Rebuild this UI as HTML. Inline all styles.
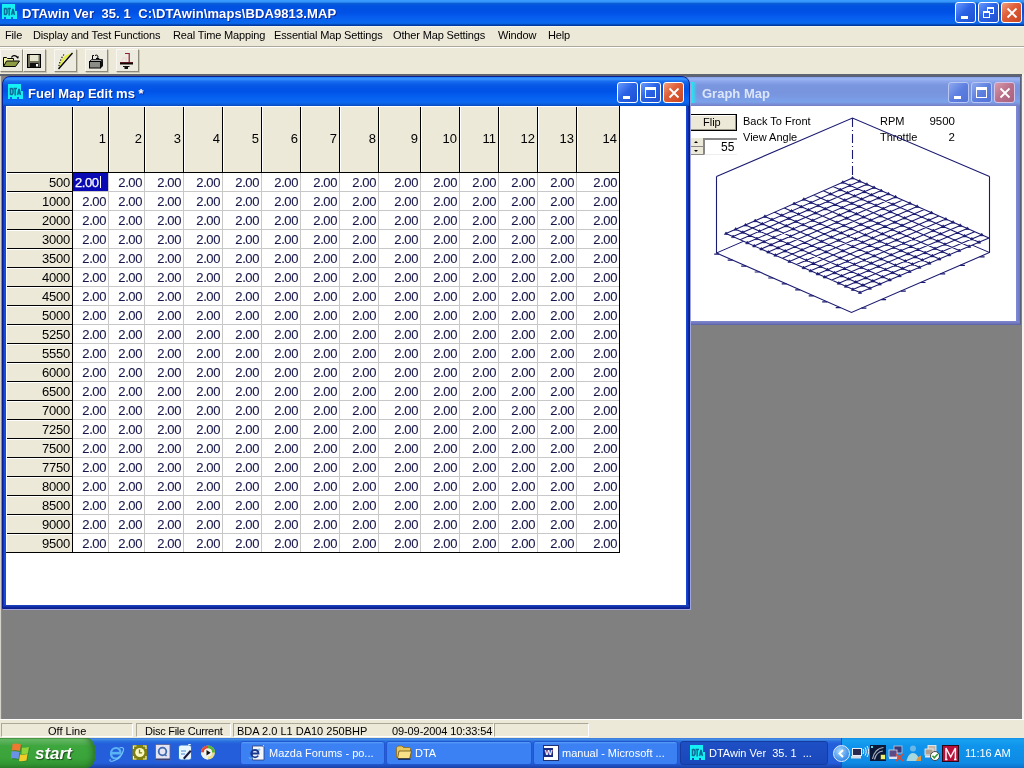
<!DOCTYPE html><html><head><meta charset="utf-8"><style>
*{box-sizing:border-box}
body{margin:0;width:1024px;height:768px;position:relative;overflow:hidden;background:#808080;font-family:'Liberation Sans', sans-serif;}
.ab{position:absolute}
.t{position:absolute;white-space:nowrap;line-height:1;will-change:transform}
.menu{font-size:11px;color:#000;letter-spacing:-0.15px}
.xb{position:absolute;width:21px;height:21px;border:1px solid #fff;border-radius:3px;background:linear-gradient(135deg,#6A9BFF 0%,#2A63E6 45%,#1E4FD0 100%)}
.xc{background:linear-gradient(135deg,#F0A080 0%,#E0603A 40%,#C84422 100%)}
.ib{border-color:#B9C7F2;background:linear-gradient(135deg,#8FA9EE 0%,#5C7FE0 50%,#5272D8 100%)}
.ic{border-color:#D6C3E8;background:linear-gradient(135deg,#D89AAA 0%,#B8708A 50%,#A86080 100%)}
.tb{position:absolute;top:49px;width:23px;height:23px;border-right:1px solid #8F8B7A;border-bottom:1px solid #8F8B7A;border-left:1px solid #F8F7F2;border-top:1px solid #F8F7F2;background:#EDEBE0;box-shadow:1px 1px 0 #C9C6B6}
.cell{position:absolute;font-size:13px;letter-spacing:-0.4px;color:#16164A;text-align:right;-webkit-text-stroke:0.1px #16164A}
.gt{-webkit-text-stroke:0px #000}
</style></head><body>

<div class="ab" style="left:0;top:0;width:1024px;height:26px;background:linear-gradient(to bottom,#3D9CFF 0px,#3393F8 2px,#0A5DD6 3.5px,#0052E0 6px,#0050E6 12px,#075FF0 18px,#0A68EE 23px,#0A5ED6 24px,#0039A0 25px,#0039A0 26px)"></div>
<svg class="ab" style="left:2px;top:4px" width="16" height="16" viewBox="0 0 16 16"><path d="M0 0H13V7H15V15H11V13H9V15H4V13H2V15H0z" fill="#14F0F4"/><path d="M2.5 4V11M2.5 4.5H4L5 6V9L4 10.5H2.5M5.5 4.5H9M7.2 4.5V11.5M9.5 11L11 5L12.5 11M10 9H12" fill="none" stroke="#0A6E98" stroke-width="1.5"/></svg>
<div class="t" style="left:22px;top:7px;font-size:13px;font-weight:bold;color:#fff;letter-spacing:0.1px;text-shadow:1px 1px 0 #0A2A9A">DTAwin Ver&nbsp; 35. 1&nbsp; C:\DTAwin\maps\BDA9813.MAP</div>
<div class="xb" style="left:955px;top:2px"><div class="ab" style="left:5px;top:13px;width:7px;height:3px;background:#fff"></div></div><div class="xb" style="left:978px;top:2px"><div class="ab" style="left:8px;top:4px;width:7px;height:7px;border:1px solid #fff;border-top-width:2px"></div><div class="ab" style="left:4px;top:8px;width:7px;height:7px;border:1px solid #fff;border-top-width:2px;background:#2E62E2"></div></div><div class="xb xc" style="left:1001px;top:2px"><svg class="ab" style="left:2px;top:2px" width="15" height="15" viewBox="0 0 15 15"><path d="M3.5 3.5l9 9M12.5 3.5l-9 9" stroke="#fff" stroke-width="1.8"/></svg></div>
<div class="ab" style="left:0;top:26px;width:1024px;height:20px;background:#ECE9D8;border-top:1px solid #F6F6F0"></div>
<div class="t menu" style="left:5px;top:30px">File</div>
<div class="t menu" style="left:33px;top:30px">Display and Test Functions</div>
<div class="t menu" style="left:173px;top:30px">Real Time Mapping</div>
<div class="t menu" style="left:274px;top:30px">Essential Map Settings</div>
<div class="t menu" style="left:393px;top:30px">Other Map Settings</div>
<div class="t menu" style="left:498px;top:30px">Window</div>
<div class="t menu" style="left:548px;top:30px">Help</div>
<div class="ab" style="left:0;top:46px;width:1024px;height:1px;background:#ACA899"></div><div class="ab" style="left:0;top:47px;width:1024px;height:1px;background:#fff"></div>
<div class="ab" style="left:0;top:48px;width:1024px;height:26px;background:#ECE9D8"></div>
<div class="ab" style="left:0;top:74px;width:1024px;height:2px;background:#5E6470"></div>
<div class="tb" style="left:0px"></div>
<div class="tb" style="left:23px"></div>
<div class="tb" style="left:54px"></div>
<div class="tb" style="left:85px"></div>
<div class="tb" style="left:116px"></div>
<svg class="ab" style="left:0;top:46px" width="140" height="28" viewBox="0 46 140 28">
<path d="M11.5 57.5c0.5-2 4-3 6 0" fill="none" stroke="#000" stroke-width="1.1"/><path d="M16 56.5h3l-1 2.5z" fill="#000"/>
<path d="M3.5 66.5V57.5h3l1 1h6v2" fill="#F2F4A8" stroke="#000" stroke-width="1"/>
<path d="M3.5 66.5l3-5.5h13l-4 5.5z" fill="#8E9A44" stroke="#000" stroke-width="1"/>
<rect x="27.5" y="54.5" width="13" height="13" fill="#6E6E58" stroke="#000" stroke-width="1"/>
<rect x="30" y="55" width="8.5" height="6" fill="#E6E6D0"/>
<rect x="30" y="63" width="8.5" height="4.5" fill="#111"/><rect x="36" y="64" width="2" height="2.5" fill="#fff"/>
<path d="M59 68.5C60 61 63 55 72 53L64 60z" fill="#E6F038"/>
<path d="M58.5 69L72.5 53" stroke="#000" stroke-width="1.3"/>
<path d="M64 54.5C61 58 59.5 63 58.5 68" fill="none" stroke="#000" stroke-width="1.1" stroke-dasharray="1.3 1.6"/>
<path d="M92.5 59V55.5h1.5M95 55.5c2-1 3 0 3 1.5s-2 1.5-2 1.5h3v1.5h2" fill="none" stroke="#000" stroke-width="1"/>
<path d="M89.5 61.5h11l2-2h-11z" fill="#AAA" stroke="#000" stroke-width="0.8"/>
<rect x="89.5" y="61.5" width="11" height="6.5" fill="#8C8C86" stroke="#000" stroke-width="1"/>
<path d="M100.5 68.5l2.5-2.5V59.5l-2.5 2.5z" fill="#111"/>
<path d="M125 53.5h4.2v8.5" fill="none" stroke="#8A2030" stroke-width="1.2"/>
<path d="M124 57l-2 4M126 57v4" stroke="#F4C8D0" stroke-width="0.8"/>
<rect x="120" y="62" width="13" height="2.5" fill="#120808"/>
<rect x="120" y="62" width="13" height="0.8" fill="#6A1A20"/>
<rect x="123" y="66" width="6.5" height="1" fill="#111"/><rect x="124.5" y="66.5" width="3.5" height="2.5" fill="#111"/>
</svg>
<div class="ab" style="left:0;top:719px;width:1024px;height:19px;background:#ECE9D8;border-top:1px solid #fff"></div>
<div class="ab" style="left:1022px;top:74px;width:2px;height:645px;background:#F4F3EE"></div><div class="ab" style="left:0;top:76px;width:1px;height:643px;background:#D4D2C8"></div><div class="ab" style="left:1px;top:76px;width:1px;height:643px;background:#8A8A88"></div>
<div class="ab" style="left:1px;top:723px;width:132px;height:14px;border-top:1px solid #ACA899;border-left:1px solid #ACA899;border-right:1px solid #fff;border-bottom:1px solid #fff"></div>
<div class="ab" style="left:136px;top:723px;width:95px;height:14px;border-top:1px solid #ACA899;border-left:1px solid #ACA899;border-right:1px solid #fff;border-bottom:1px solid #fff"></div>
<div class="ab" style="left:233px;top:723px;width:261px;height:14px;border-top:1px solid #ACA899;border-left:1px solid #ACA899;border-right:1px solid #fff;border-bottom:1px solid #fff"></div>
<div class="ab" style="left:494px;top:723px;width:95px;height:14px;border-top:1px solid #ACA899;border-left:1px solid #ACA899;border-right:1px solid #fff;border-bottom:1px solid #fff"></div>
<div class="t" style="left:48px;top:726px;font-size:11px;color:#000;letter-spacing:0px">Off Line</div>
<div class="t" style="left:145px;top:726px;font-size:11px;color:#000;letter-spacing:-0.25px">Disc File Current</div>
<div class="t" style="left:237px;top:726px;font-size:11px;color:#000;letter-spacing:0px">BDA 2.0 L1 DA10 250BHP</div>
<div class="t" style="left:392px;top:726px;font-size:11px;color:#000;letter-spacing:-0.1px">09-09-2004 10:33:54</div>
<div class="ab" style="left:682px;top:76px;width:339px;height:249px;background:linear-gradient(to right,#7C88D4 0,#7C88D4 calc(100% - 3px),#6A74C0 100%);border-radius:7px 1px 0 0;border:1px solid #6068A8;border-top-color:#58607A;border-right-color:#58607A"></div><div class="ab" style="left:683px;top:321px;width:337px;height:3px;background:linear-gradient(to bottom,#8088D0,#6A70B8)"></div>
<div class="ab" style="left:683px;top:77px;width:337px;height:29px;border-radius:6px 0 0 0;background:linear-gradient(to bottom,#8AA2E6 0px,#9DB6F4 2px,#8EA8EC 4px,#7A96DF 8px,#7894DE 16px,#7A9CE6 22px,#7BA2EA 25px,#7A8ED8 27px,#7480C4 29px)"></div>
<div class="ab" style="left:690px;top:106px;width:326px;height:215px;background:#fff"></div>
<div class="ab" style="left:689px;top:82px;width:8px;height:21px;background:linear-gradient(to right,#18E8F4 0,#28E0F2 45%,rgba(122,150,223,0) 100%);border-radius:0 3px 3px 0"></div>
<div class="t" style="left:702px;top:87px;font-size:13px;font-weight:bold;color:#DCE6FA">Graph Map</div>
<div class="xb ib" style="left:948px;top:82px"><div class="ab" style="left:5px;top:13px;width:7px;height:3px;background:#fff"></div></div><div class="xb ib" style="left:971px;top:82px"><div class="ab" style="left:4px;top:4px;width:11px;height:11px;border:1px solid #fff;border-top-width:3px"></div></div><div class="xb ic" style="left:994px;top:82px"><svg class="ab" style="left:2px;top:2px" width="15" height="15" viewBox="0 0 15 15"><path d="M3.5 3.5l9 9M12.5 3.5l-9 9" stroke="#fff" stroke-width="1.8"/></svg></div>
<div class="ab" style="left:680px;top:114px;width:57px;height:17px;background:#ECE9D8;border:1px solid #000;box-shadow:inset -1px -1px 0 #A09C8C,inset 1px 1px 0 #fff"></div>
<div class="t" style="left:703px;top:117px;font-size:11px;color:#000">Flip</div>
<div class="ab" style="left:686px;top:138px;width:18px;height:17px;background:#ECE9D8;border-right:1px solid #888;border-bottom:1px solid #888"></div>
<div class="ab" style="left:686px;top:146px;width:18px;height:1px;background:#888"></div>
<div class="ab" style="left:694px;top:141px;width:0;height:0;border-left:2px solid transparent;border-right:2px solid transparent;border-bottom:2px solid #000"></div>
<div class="ab" style="left:694px;top:150px;width:0;height:0;border-left:2px solid transparent;border-right:2px solid transparent;border-top:2px solid #000"></div>
<div class="ab" style="left:704px;top:138px;width:33px;height:17px;background:#fff;border-top:2px solid #888;border-left:1px solid #888;border-bottom:1px solid #eee"></div>
<div class="t" style="left:721px;top:141px;font-size:12px;color:#000">55</div>
<div class="t" style="left:743px;top:116px;font-size:11px;color:#000">Back To Front</div>
<div class="t" style="left:743px;top:132px;font-size:11px;color:#000">View Angle</div>
<div class="t" style="left:880px;top:116px;font-size:11px;color:#000">RPM</div>
<div class="t" style="left:880px;top:132px;font-size:11px;color:#000">Throttle</div>
<div class="t" style="left:925px;top:116px;font-size:11.5px;color:#000;width:30px;text-align:right">9500</div>
<div class="t" style="left:925px;top:132px;font-size:11.5px;color:#000;width:30px;text-align:right">2</div>
<svg class="ab" style="left:0;top:0" width="1024" height="768" viewBox="0 0 1024 768"><path d="M716.5,253.0 L852.5,194.0 L989.5,252.5" fill="none" stroke="#1A1A70" stroke-width="1"/><path d="M716.5,176.5 L852.5,118.0 L989.5,176.5 M716.5,176.5 L716.5,253.0 L851.5,312.5 L989.5,252.5 L989.5,176.5" fill="none" stroke="#1A1A70" stroke-width="1.1"/><path d="M852.5,118 V178" stroke="#1A1A70" stroke-width="1.1" stroke-dasharray="9 3 1 3"/><path d="M719.2,254.2 h-5 M732.7,260.1 h-5 M746.2,266.1 h-5 M759.7,272.0 h-5 M773.2,278.0 h-5 M786.7,283.9 h-5 M800.2,289.9 h-5 M813.7,295.8 h-5 M827.2,301.8 h-5 M840.7,307.7 h-5 M861.4,308.2 h5 M881.1,299.6 h5 M900.8,291.1 h5 M920.5,282.5 h5 M940.2,273.9 h5 M959.9,265.4 h5 M979.6,256.8 h5" stroke="#1A1A70" stroke-width="1.2"/><path d="M852.5,178.0 L726.0,233.5 L860.0,292.5 L989.0,238.0 z" fill="#fff"/><path d="M852.5,178.0L989.0,238.0M842.8,182.3L979.1,242.2M833.0,186.5L969.2,246.4M823.3,190.8L959.2,250.6M813.6,195.1L949.3,254.8M803.8,199.3L939.4,259.0M794.1,203.6L929.5,263.2M784.4,207.9L919.5,267.3M774.7,212.2L909.6,271.5M764.9,216.4L899.7,275.7M755.2,220.7L889.8,279.9M745.5,225.0L879.8,284.1M735.7,229.2L869.9,288.3M726.0,233.5L860.0,292.5M852.5,178.0L726.0,233.5M859.7,181.2L733.1,236.6M866.9,184.3L740.1,239.7M874.1,187.5L747.2,242.8M881.2,190.6L754.2,245.9M888.4,193.8L761.3,249.0M895.6,196.9L768.3,252.1M902.8,200.1L775.4,255.2M910.0,203.3L782.4,258.3M917.2,206.4L789.5,261.4M924.3,209.6L796.5,264.6M931.5,212.7L803.6,267.7M938.7,215.9L810.6,270.8M945.9,219.1L817.7,273.9M953.1,222.2L824.7,277.0M960.3,225.4L831.8,280.1M967.4,228.5L838.8,283.2M974.6,231.7L845.9,286.3M981.8,234.8L852.9,289.4M989.0,238.0L860.0,292.5" fill="none" stroke="#1A1A70" stroke-width="1.05"/><path d="M850.9,179.0h3.2l-1.6,-2.6zM858.1,182.2h3.2l-1.6,-2.6zM865.3,185.3h3.2l-1.6,-2.6zM872.5,188.5h3.2l-1.6,-2.6zM879.6,191.6h3.2l-1.6,-2.6zM886.8,194.8h3.2l-1.6,-2.6zM894.0,197.9h3.2l-1.6,-2.6zM908.4,204.3h3.2l-1.6,-2.6zM915.6,207.4h3.2l-1.6,-2.6zM929.9,213.7h3.2l-1.6,-2.6zM944.3,220.1h3.2l-1.6,-2.6zM951.5,223.2h3.2l-1.6,-2.6zM958.7,226.4h3.2l-1.6,-2.6zM965.8,229.5h3.2l-1.6,-2.6zM980.2,235.8h3.2l-1.6,-2.6zM841.2,183.3h3.2l-1.6,-2.6zM848.3,186.4h3.2l-1.6,-2.6zM862.7,192.7h3.2l-1.6,-2.6zM869.9,195.9h3.2l-1.6,-2.6zM877.0,199.0h3.2l-1.6,-2.6zM891.4,205.3h3.2l-1.6,-2.6zM927.3,221.1h3.2l-1.6,-2.6zM941.6,227.4h3.2l-1.6,-2.6zM963.1,236.9h3.2l-1.6,-2.6zM970.3,240.0h3.2l-1.6,-2.6zM977.5,243.2h3.2l-1.6,-2.6zM838.6,190.7h3.2l-1.6,-2.6zM845.8,193.8h3.2l-1.6,-2.6zM852.9,197.0h3.2l-1.6,-2.6zM860.1,200.1h3.2l-1.6,-2.6zM867.3,203.3h3.2l-1.6,-2.6zM874.4,206.4h3.2l-1.6,-2.6zM881.6,209.6h3.2l-1.6,-2.6zM888.8,212.7h3.2l-1.6,-2.6zM903.1,219.0h3.2l-1.6,-2.6zM931.7,231.6h3.2l-1.6,-2.6zM938.9,234.8h3.2l-1.6,-2.6zM967.6,247.4h3.2l-1.6,-2.6zM828.9,195.0h3.2l-1.6,-2.6zM843.2,201.2h3.2l-1.6,-2.6zM850.3,204.4h3.2l-1.6,-2.6zM857.5,207.5h3.2l-1.6,-2.6zM878.9,217.0h3.2l-1.6,-2.6zM893.2,223.3h3.2l-1.6,-2.6zM900.4,226.4h3.2l-1.6,-2.6zM907.6,229.6h3.2l-1.6,-2.6zM929.0,239.0h3.2l-1.6,-2.6zM936.2,242.1h3.2l-1.6,-2.6zM943.3,245.3h3.2l-1.6,-2.6zM957.6,251.6h3.2l-1.6,-2.6zM826.3,202.4h3.2l-1.6,-2.6zM840.6,208.6h3.2l-1.6,-2.6zM847.7,211.8h3.2l-1.6,-2.6zM854.8,214.9h3.2l-1.6,-2.6zM862.0,218.1h3.2l-1.6,-2.6zM869.1,221.2h3.2l-1.6,-2.6zM876.3,224.4h3.2l-1.6,-2.6zM883.4,227.5h3.2l-1.6,-2.6zM890.6,230.6h3.2l-1.6,-2.6zM897.7,233.8h3.2l-1.6,-2.6zM912.0,240.1h3.2l-1.6,-2.6zM933.4,249.5h3.2l-1.6,-2.6zM940.6,252.6h3.2l-1.6,-2.6zM947.7,255.8h3.2l-1.6,-2.6zM802.2,200.3h3.2l-1.6,-2.6zM809.4,203.5h3.2l-1.6,-2.6zM816.5,206.6h3.2l-1.6,-2.6zM823.6,209.8h3.2l-1.6,-2.6zM837.9,216.0h3.2l-1.6,-2.6zM845.0,219.2h3.2l-1.6,-2.6zM859.3,225.4h3.2l-1.6,-2.6zM866.4,228.6h3.2l-1.6,-2.6zM880.7,234.9h3.2l-1.6,-2.6zM887.8,238.0h3.2l-1.6,-2.6zM895.0,241.1h3.2l-1.6,-2.6zM902.1,244.3h3.2l-1.6,-2.6zM909.3,247.4h3.2l-1.6,-2.6zM916.4,250.5h3.2l-1.6,-2.6zM923.5,253.7h3.2l-1.6,-2.6zM930.7,256.8h3.2l-1.6,-2.6zM937.8,260.0h3.2l-1.6,-2.6zM792.5,204.6h3.2l-1.6,-2.6zM799.6,207.7h3.2l-1.6,-2.6zM806.8,210.9h3.2l-1.6,-2.6zM813.9,214.0h3.2l-1.6,-2.6zM835.3,223.4h3.2l-1.6,-2.6zM842.4,226.6h3.2l-1.6,-2.6zM849.5,229.7h3.2l-1.6,-2.6zM863.8,236.0h3.2l-1.6,-2.6zM870.9,239.1h3.2l-1.6,-2.6zM878.0,242.2h3.2l-1.6,-2.6zM885.1,245.4h3.2l-1.6,-2.6zM892.2,248.5h3.2l-1.6,-2.6zM899.4,251.6h3.2l-1.6,-2.6zM906.5,254.8h3.2l-1.6,-2.6zM913.6,257.9h3.2l-1.6,-2.6zM920.7,261.0h3.2l-1.6,-2.6zM927.9,264.2h3.2l-1.6,-2.6zM789.9,212.0h3.2l-1.6,-2.6zM797.0,215.1h3.2l-1.6,-2.6zM811.2,221.4h3.2l-1.6,-2.6zM818.4,224.5h3.2l-1.6,-2.6zM832.6,230.8h3.2l-1.6,-2.6zM839.7,233.9h3.2l-1.6,-2.6zM846.8,237.1h3.2l-1.6,-2.6zM853.9,240.2h3.2l-1.6,-2.6zM861.0,243.3h3.2l-1.6,-2.6zM868.1,246.4h3.2l-1.6,-2.6zM875.3,249.6h3.2l-1.6,-2.6zM889.5,255.8h3.2l-1.6,-2.6zM903.7,262.1h3.2l-1.6,-2.6zM910.8,265.2h3.2l-1.6,-2.6zM917.9,268.3h3.2l-1.6,-2.6zM780.2,216.3h3.2l-1.6,-2.6zM787.3,219.4h3.2l-1.6,-2.6zM794.4,222.5h3.2l-1.6,-2.6zM801.5,225.7h3.2l-1.6,-2.6zM808.6,228.8h3.2l-1.6,-2.6zM829.9,238.2h3.2l-1.6,-2.6zM837.0,241.3h3.2l-1.6,-2.6zM851.2,247.5h3.2l-1.6,-2.6zM865.4,253.8h3.2l-1.6,-2.6zM872.5,256.9h3.2l-1.6,-2.6zM879.6,260.0h3.2l-1.6,-2.6zM893.8,266.3h3.2l-1.6,-2.6zM900.9,269.4h3.2l-1.6,-2.6zM908.0,272.5h3.2l-1.6,-2.6zM763.3,217.4h3.2l-1.6,-2.6zM770.4,220.5h3.2l-1.6,-2.6zM784.6,226.8h3.2l-1.6,-2.6zM791.7,229.9h3.2l-1.6,-2.6zM820.1,242.4h3.2l-1.6,-2.6zM841.3,251.8h3.2l-1.6,-2.6zM862.6,261.1h3.2l-1.6,-2.6zM869.7,264.2h3.2l-1.6,-2.6zM876.8,267.4h3.2l-1.6,-2.6zM883.9,270.5h3.2l-1.6,-2.6zM891.0,273.6h3.2l-1.6,-2.6zM898.1,276.7h3.2l-1.6,-2.6zM753.6,221.7h3.2l-1.6,-2.6zM760.7,224.8h3.2l-1.6,-2.6zM774.8,231.0h3.2l-1.6,-2.6zM789.0,237.3h3.2l-1.6,-2.6zM817.3,249.7h3.2l-1.6,-2.6zM824.4,252.9h3.2l-1.6,-2.6zM838.6,259.1h3.2l-1.6,-2.6zM845.7,262.2h3.2l-1.6,-2.6zM852.8,265.3h3.2l-1.6,-2.6zM859.8,268.5h3.2l-1.6,-2.6zM866.9,271.6h3.2l-1.6,-2.6zM881.1,277.8h3.2l-1.6,-2.6zM888.2,280.9h3.2l-1.6,-2.6zM743.9,226.0h3.2l-1.6,-2.6zM758.0,232.2h3.2l-1.6,-2.6zM772.2,238.4h3.2l-1.6,-2.6zM779.2,241.5h3.2l-1.6,-2.6zM786.3,244.6h3.2l-1.6,-2.6zM800.4,250.9h3.2l-1.6,-2.6zM835.8,266.4h3.2l-1.6,-2.6zM842.9,269.5h3.2l-1.6,-2.6zM857.0,275.8h3.2l-1.6,-2.6zM864.1,278.9h3.2l-1.6,-2.6zM871.2,282.0h3.2l-1.6,-2.6zM878.2,285.1h3.2l-1.6,-2.6zM734.1,230.2h3.2l-1.6,-2.6zM741.2,233.3h3.2l-1.6,-2.6zM755.3,239.6h3.2l-1.6,-2.6zM762.4,242.7h3.2l-1.6,-2.6zM769.4,245.8h3.2l-1.6,-2.6zM776.5,248.9h3.2l-1.6,-2.6zM783.6,252.0h3.2l-1.6,-2.6zM804.8,261.3h3.2l-1.6,-2.6zM811.8,264.4h3.2l-1.6,-2.6zM818.9,267.5h3.2l-1.6,-2.6zM825.9,270.7h3.2l-1.6,-2.6zM833.0,273.8h3.2l-1.6,-2.6zM840.1,276.9h3.2l-1.6,-2.6zM847.1,280.0h3.2l-1.6,-2.6zM854.2,283.1h3.2l-1.6,-2.6zM861.3,286.2h3.2l-1.6,-2.6zM868.3,289.3h3.2l-1.6,-2.6zM724.4,234.5h3.2l-1.6,-2.6zM731.5,237.6h3.2l-1.6,-2.6zM745.6,243.8h3.2l-1.6,-2.6zM752.6,246.9h3.2l-1.6,-2.6zM759.7,250.0h3.2l-1.6,-2.6zM766.7,253.1h3.2l-1.6,-2.6zM773.8,256.2h3.2l-1.6,-2.6zM787.9,262.4h3.2l-1.6,-2.6zM802.0,268.7h3.2l-1.6,-2.6zM809.0,271.8h3.2l-1.6,-2.6zM816.1,274.9h3.2l-1.6,-2.6zM823.1,278.0h3.2l-1.6,-2.6zM837.2,284.2h3.2l-1.6,-2.6zM844.3,287.3h3.2l-1.6,-2.6zM851.3,290.4h3.2l-1.6,-2.6zM858.4,293.5h3.2l-1.6,-2.6z" fill="#1A1A70" stroke="#1A1A70" stroke-width="0.6"/></svg>
<div class="ab" style="left:2px;top:76px;width:688px;height:533px;background:linear-gradient(to right,#0A2AA8 0,#1A4AD8 1.5px,#1846D0 calc(100% - 2px),#0A2090 100%);border-radius:8px 8px 0 0;border:1px solid #0A1E90;box-shadow:1px 1px 0 #A0A4D8"></div><div class="ab" style="left:3px;top:605px;width:686px;height:3px;background:linear-gradient(to bottom,#1C44C4,#0C2290)"></div>
<div class="ab" style="left:3px;top:77px;width:686px;height:29px;border-radius:7px 7px 0 0;background:linear-gradient(to bottom,#1F7CF4 0px,#3A95FF 2px,#1A70F0 4px,#0858E6 8px,#0052E6 14px,#0560F0 20px,#0A68F2 25px,#0A5FDC 27px,#0848C0 29px)"></div>
<div class="ab" style="left:6px;top:106px;width:680px;height:499px;background:#fff"></div>
<svg class="ab" style="left:8px;top:84px" width="16" height="16" viewBox="0 0 16 16"><path d="M0 0H13V7H15V15H11V13H9V15H4V13H2V15H0z" fill="#14F0F4"/><path d="M2.5 4V11M2.5 4.5H4L5 6V9L4 10.5H2.5M5.5 4.5H9M7.2 4.5V11.5M9.5 11L11 5L12.5 11M10 9H12" fill="none" stroke="#0A6E98" stroke-width="1.5"/></svg>
<div class="t" style="left:28px;top:87px;font-size:13px;font-weight:bold;color:#fff;text-shadow:1px 1px 0 #0A2A9A">Fuel Map Edit ms *</div>
<div class="xb" style="left:617px;top:82px"><div class="ab" style="left:5px;top:13px;width:7px;height:3px;background:#fff"></div></div><div class="xb" style="left:640px;top:82px"><div class="ab" style="left:4px;top:4px;width:11px;height:11px;border:1px solid #fff;border-top-width:3px"></div></div><div class="xb xc" style="left:663px;top:82px"><svg class="ab" style="left:2px;top:2px" width="15" height="15" viewBox="0 0 15 15"><path d="M3.5 3.5l9 9M12.5 3.5l-9 9" stroke="#fff" stroke-width="1.8"/></svg></div>
<div class="ab" style="left:6px;top:106px;width:613px;height:66px;background:#ECE9D8"></div>
<div class="ab" style="left:6px;top:106px;width:66px;height:447px;background:#ECE9D8"></div>
<div class="ab" style="left:73px;top:191px;width:546px;height:1px;background:#C8C8C8"></div>
<div class="ab" style="left:73px;top:210px;width:546px;height:1px;background:#C8C8C8"></div>
<div class="ab" style="left:73px;top:229px;width:546px;height:1px;background:#C8C8C8"></div>
<div class="ab" style="left:73px;top:248px;width:546px;height:1px;background:#C8C8C8"></div>
<div class="ab" style="left:73px;top:267px;width:546px;height:1px;background:#C8C8C8"></div>
<div class="ab" style="left:73px;top:286px;width:546px;height:1px;background:#C8C8C8"></div>
<div class="ab" style="left:73px;top:305px;width:546px;height:1px;background:#C8C8C8"></div>
<div class="ab" style="left:73px;top:324px;width:546px;height:1px;background:#C8C8C8"></div>
<div class="ab" style="left:73px;top:343px;width:546px;height:1px;background:#C8C8C8"></div>
<div class="ab" style="left:73px;top:362px;width:546px;height:1px;background:#C8C8C8"></div>
<div class="ab" style="left:73px;top:381px;width:546px;height:1px;background:#C8C8C8"></div>
<div class="ab" style="left:73px;top:400px;width:546px;height:1px;background:#C8C8C8"></div>
<div class="ab" style="left:73px;top:419px;width:546px;height:1px;background:#C8C8C8"></div>
<div class="ab" style="left:73px;top:438px;width:546px;height:1px;background:#C8C8C8"></div>
<div class="ab" style="left:73px;top:457px;width:546px;height:1px;background:#C8C8C8"></div>
<div class="ab" style="left:73px;top:476px;width:546px;height:1px;background:#C8C8C8"></div>
<div class="ab" style="left:73px;top:495px;width:546px;height:1px;background:#C8C8C8"></div>
<div class="ab" style="left:73px;top:514px;width:546px;height:1px;background:#C8C8C8"></div>
<div class="ab" style="left:73px;top:533px;width:546px;height:1px;background:#C8C8C8"></div>
<div class="ab" style="left:108px;top:173px;width:1px;height:379px;background:#C8C8C8"></div>
<div class="ab" style="left:144px;top:173px;width:1px;height:379px;background:#C8C8C8"></div>
<div class="ab" style="left:183px;top:173px;width:1px;height:379px;background:#C8C8C8"></div>
<div class="ab" style="left:222px;top:173px;width:1px;height:379px;background:#C8C8C8"></div>
<div class="ab" style="left:261px;top:173px;width:1px;height:379px;background:#C8C8C8"></div>
<div class="ab" style="left:300px;top:173px;width:1px;height:379px;background:#C8C8C8"></div>
<div class="ab" style="left:339px;top:173px;width:1px;height:379px;background:#C8C8C8"></div>
<div class="ab" style="left:378px;top:173px;width:1px;height:379px;background:#C8C8C8"></div>
<div class="ab" style="left:420px;top:173px;width:1px;height:379px;background:#C8C8C8"></div>
<div class="ab" style="left:459px;top:173px;width:1px;height:379px;background:#C8C8C8"></div>
<div class="ab" style="left:498px;top:173px;width:1px;height:379px;background:#C8C8C8"></div>
<div class="ab" style="left:537px;top:173px;width:1px;height:379px;background:#C8C8C8"></div>
<div class="ab" style="left:576px;top:173px;width:1px;height:379px;background:#C8C8C8"></div>
<div class="ab" style="left:72px;top:106px;width:1px;height:66px;background:#000"></div>
<div class="ab" style="left:108px;top:106px;width:1px;height:66px;background:#000"></div>
<div class="ab" style="left:144px;top:106px;width:1px;height:66px;background:#000"></div>
<div class="ab" style="left:183px;top:106px;width:1px;height:66px;background:#000"></div>
<div class="ab" style="left:222px;top:106px;width:1px;height:66px;background:#000"></div>
<div class="ab" style="left:261px;top:106px;width:1px;height:66px;background:#000"></div>
<div class="ab" style="left:300px;top:106px;width:1px;height:66px;background:#000"></div>
<div class="ab" style="left:339px;top:106px;width:1px;height:66px;background:#000"></div>
<div class="ab" style="left:378px;top:106px;width:1px;height:66px;background:#000"></div>
<div class="ab" style="left:420px;top:106px;width:1px;height:66px;background:#000"></div>
<div class="ab" style="left:459px;top:106px;width:1px;height:66px;background:#000"></div>
<div class="ab" style="left:498px;top:106px;width:1px;height:66px;background:#000"></div>
<div class="ab" style="left:537px;top:106px;width:1px;height:66px;background:#000"></div>
<div class="ab" style="left:576px;top:106px;width:1px;height:66px;background:#000"></div>
<div class="ab" style="left:619px;top:106px;width:1px;height:66px;background:#000"></div>
<div class="ab" style="left:6px;top:172px;width:614px;height:1px;background:#000"></div>
<div class="ab" style="left:6px;top:191px;width:66px;height:1px;background:#000"></div>
<div class="ab" style="left:6px;top:210px;width:66px;height:1px;background:#000"></div>
<div class="ab" style="left:6px;top:229px;width:66px;height:1px;background:#000"></div>
<div class="ab" style="left:6px;top:248px;width:66px;height:1px;background:#000"></div>
<div class="ab" style="left:6px;top:267px;width:66px;height:1px;background:#000"></div>
<div class="ab" style="left:6px;top:286px;width:66px;height:1px;background:#000"></div>
<div class="ab" style="left:6px;top:305px;width:66px;height:1px;background:#000"></div>
<div class="ab" style="left:6px;top:324px;width:66px;height:1px;background:#000"></div>
<div class="ab" style="left:6px;top:343px;width:66px;height:1px;background:#000"></div>
<div class="ab" style="left:6px;top:362px;width:66px;height:1px;background:#000"></div>
<div class="ab" style="left:6px;top:381px;width:66px;height:1px;background:#000"></div>
<div class="ab" style="left:6px;top:400px;width:66px;height:1px;background:#000"></div>
<div class="ab" style="left:6px;top:419px;width:66px;height:1px;background:#000"></div>
<div class="ab" style="left:6px;top:438px;width:66px;height:1px;background:#000"></div>
<div class="ab" style="left:6px;top:457px;width:66px;height:1px;background:#000"></div>
<div class="ab" style="left:6px;top:476px;width:66px;height:1px;background:#000"></div>
<div class="ab" style="left:6px;top:495px;width:66px;height:1px;background:#000"></div>
<div class="ab" style="left:6px;top:514px;width:66px;height:1px;background:#000"></div>
<div class="ab" style="left:6px;top:533px;width:66px;height:1px;background:#000"></div>
<div class="ab" style="left:6px;top:552px;width:66px;height:1px;background:#000"></div>
<div class="ab" style="left:72px;top:172px;width:1px;height:381px;background:#000"></div>
<div class="ab" style="left:72px;top:552px;width:548px;height:1px;background:#000"></div>
<div class="ab" style="left:619px;top:172px;width:1px;height:381px;background:#000"></div>
<div class="ab" style="left:6px;top:106px;width:613px;height:1px;background:#fff"></div>
<div class="ab" style="left:6px;top:106px;width:1px;height:446px;background:#fff"></div>
<div class="ab" style="left:73px;top:106px;width:1px;height:66px;background:#fff"></div>
<div class="ab" style="left:109px;top:106px;width:1px;height:66px;background:#fff"></div>
<div class="ab" style="left:145px;top:106px;width:1px;height:66px;background:#fff"></div>
<div class="ab" style="left:184px;top:106px;width:1px;height:66px;background:#fff"></div>
<div class="ab" style="left:223px;top:106px;width:1px;height:66px;background:#fff"></div>
<div class="ab" style="left:262px;top:106px;width:1px;height:66px;background:#fff"></div>
<div class="ab" style="left:301px;top:106px;width:1px;height:66px;background:#fff"></div>
<div class="ab" style="left:340px;top:106px;width:1px;height:66px;background:#fff"></div>
<div class="ab" style="left:379px;top:106px;width:1px;height:66px;background:#fff"></div>
<div class="ab" style="left:421px;top:106px;width:1px;height:66px;background:#fff"></div>
<div class="ab" style="left:460px;top:106px;width:1px;height:66px;background:#fff"></div>
<div class="ab" style="left:499px;top:106px;width:1px;height:66px;background:#fff"></div>
<div class="ab" style="left:538px;top:106px;width:1px;height:66px;background:#fff"></div>
<div class="ab" style="left:577px;top:106px;width:1px;height:66px;background:#fff"></div>
<div class="ab" style="left:6px;top:173px;width:66px;height:1px;background:#fff"></div>
<div class="ab" style="left:6px;top:192px;width:66px;height:1px;background:#fff"></div>
<div class="ab" style="left:6px;top:211px;width:66px;height:1px;background:#fff"></div>
<div class="ab" style="left:6px;top:230px;width:66px;height:1px;background:#fff"></div>
<div class="ab" style="left:6px;top:249px;width:66px;height:1px;background:#fff"></div>
<div class="ab" style="left:6px;top:268px;width:66px;height:1px;background:#fff"></div>
<div class="ab" style="left:6px;top:287px;width:66px;height:1px;background:#fff"></div>
<div class="ab" style="left:6px;top:306px;width:66px;height:1px;background:#fff"></div>
<div class="ab" style="left:6px;top:325px;width:66px;height:1px;background:#fff"></div>
<div class="ab" style="left:6px;top:344px;width:66px;height:1px;background:#fff"></div>
<div class="ab" style="left:6px;top:363px;width:66px;height:1px;background:#fff"></div>
<div class="ab" style="left:6px;top:382px;width:66px;height:1px;background:#fff"></div>
<div class="ab" style="left:6px;top:401px;width:66px;height:1px;background:#fff"></div>
<div class="ab" style="left:6px;top:420px;width:66px;height:1px;background:#fff"></div>
<div class="ab" style="left:6px;top:439px;width:66px;height:1px;background:#fff"></div>
<div class="ab" style="left:6px;top:458px;width:66px;height:1px;background:#fff"></div>
<div class="ab" style="left:6px;top:477px;width:66px;height:1px;background:#fff"></div>
<div class="ab" style="left:6px;top:496px;width:66px;height:1px;background:#fff"></div>
<div class="ab" style="left:6px;top:515px;width:66px;height:1px;background:#fff"></div>
<div class="ab" style="left:6px;top:534px;width:66px;height:1px;background:#fff"></div>
<div class="t gt" style="left:79px;top:132px;width:27px;text-align:right;font-size:13px;color:#000">1</div>
<div class="t gt" style="left:115px;top:132px;width:27px;text-align:right;font-size:13px;color:#000">2</div>
<div class="t gt" style="left:154px;top:132px;width:27px;text-align:right;font-size:13px;color:#000">3</div>
<div class="t gt" style="left:193px;top:132px;width:27px;text-align:right;font-size:13px;color:#000">4</div>
<div class="t gt" style="left:232px;top:132px;width:27px;text-align:right;font-size:13px;color:#000">5</div>
<div class="t gt" style="left:271px;top:132px;width:27px;text-align:right;font-size:13px;color:#000">6</div>
<div class="t gt" style="left:310px;top:132px;width:27px;text-align:right;font-size:13px;color:#000">7</div>
<div class="t gt" style="left:349px;top:132px;width:27px;text-align:right;font-size:13px;color:#000">8</div>
<div class="t gt" style="left:391px;top:132px;width:27px;text-align:right;font-size:13px;color:#000">9</div>
<div class="t gt" style="left:430px;top:132px;width:27px;text-align:right;font-size:13px;color:#000">10</div>
<div class="t gt" style="left:469px;top:132px;width:27px;text-align:right;font-size:13px;color:#000">11</div>
<div class="t gt" style="left:508px;top:132px;width:27px;text-align:right;font-size:13px;color:#000">12</div>
<div class="t gt" style="left:547px;top:132px;width:27px;text-align:right;font-size:13px;color:#000">13</div>
<div class="t gt" style="left:590px;top:132px;width:27px;text-align:right;font-size:13px;color:#000">14</div>
<div class="t gt" style="left:20px;top:176px;width:50px;text-align:right;font-size:13px;letter-spacing:-0.2px;color:#000">500</div>
<div class="t gt" style="left:20px;top:195px;width:50px;text-align:right;font-size:13px;letter-spacing:-0.2px;color:#000">1000</div>
<div class="t gt" style="left:20px;top:214px;width:50px;text-align:right;font-size:13px;letter-spacing:-0.2px;color:#000">2000</div>
<div class="t gt" style="left:20px;top:233px;width:50px;text-align:right;font-size:13px;letter-spacing:-0.2px;color:#000">3000</div>
<div class="t gt" style="left:20px;top:252px;width:50px;text-align:right;font-size:13px;letter-spacing:-0.2px;color:#000">3500</div>
<div class="t gt" style="left:20px;top:271px;width:50px;text-align:right;font-size:13px;letter-spacing:-0.2px;color:#000">4000</div>
<div class="t gt" style="left:20px;top:290px;width:50px;text-align:right;font-size:13px;letter-spacing:-0.2px;color:#000">4500</div>
<div class="t gt" style="left:20px;top:309px;width:50px;text-align:right;font-size:13px;letter-spacing:-0.2px;color:#000">5000</div>
<div class="t gt" style="left:20px;top:328px;width:50px;text-align:right;font-size:13px;letter-spacing:-0.2px;color:#000">5250</div>
<div class="t gt" style="left:20px;top:347px;width:50px;text-align:right;font-size:13px;letter-spacing:-0.2px;color:#000">5550</div>
<div class="t gt" style="left:20px;top:366px;width:50px;text-align:right;font-size:13px;letter-spacing:-0.2px;color:#000">6000</div>
<div class="t gt" style="left:20px;top:385px;width:50px;text-align:right;font-size:13px;letter-spacing:-0.2px;color:#000">6500</div>
<div class="t gt" style="left:20px;top:404px;width:50px;text-align:right;font-size:13px;letter-spacing:-0.2px;color:#000">7000</div>
<div class="t gt" style="left:20px;top:423px;width:50px;text-align:right;font-size:13px;letter-spacing:-0.2px;color:#000">7250</div>
<div class="t gt" style="left:20px;top:442px;width:50px;text-align:right;font-size:13px;letter-spacing:-0.2px;color:#000">7500</div>
<div class="t gt" style="left:20px;top:461px;width:50px;text-align:right;font-size:13px;letter-spacing:-0.2px;color:#000">7750</div>
<div class="t gt" style="left:20px;top:480px;width:50px;text-align:right;font-size:13px;letter-spacing:-0.2px;color:#000">8000</div>
<div class="t gt" style="left:20px;top:499px;width:50px;text-align:right;font-size:13px;letter-spacing:-0.2px;color:#000">8500</div>
<div class="t gt" style="left:20px;top:518px;width:50px;text-align:right;font-size:13px;letter-spacing:-0.2px;color:#000">9000</div>
<div class="t gt" style="left:20px;top:537px;width:50px;text-align:right;font-size:13px;letter-spacing:-0.2px;color:#000">9500</div>
<div class="ab" style="left:73px;top:173px;width:35px;height:18px;background:#0A0AB4"></div>
<div class="t" style="left:75px;top:176px;font-size:13px;letter-spacing:-0.4px;color:#fff;-webkit-text-stroke:0.25px #fff">2.00</div><div class="ab" style="left:100px;top:176px;width:1px;height:12px;background:#fff"></div>
<div class="t cell" style="left:112px;top:176px;width:30px">2.00</div>
<div class="t cell" style="left:151px;top:176px;width:30px">2.00</div>
<div class="t cell" style="left:190px;top:176px;width:30px">2.00</div>
<div class="t cell" style="left:229px;top:176px;width:30px">2.00</div>
<div class="t cell" style="left:268px;top:176px;width:30px">2.00</div>
<div class="t cell" style="left:307px;top:176px;width:30px">2.00</div>
<div class="t cell" style="left:346px;top:176px;width:30px">2.00</div>
<div class="t cell" style="left:388px;top:176px;width:30px">2.00</div>
<div class="t cell" style="left:427px;top:176px;width:30px">2.00</div>
<div class="t cell" style="left:466px;top:176px;width:30px">2.00</div>
<div class="t cell" style="left:505px;top:176px;width:30px">2.00</div>
<div class="t cell" style="left:544px;top:176px;width:30px">2.00</div>
<div class="t cell" style="left:587px;top:176px;width:30px">2.00</div>
<div class="t cell" style="left:76px;top:195px;width:30px">2.00</div>
<div class="t cell" style="left:112px;top:195px;width:30px">2.00</div>
<div class="t cell" style="left:151px;top:195px;width:30px">2.00</div>
<div class="t cell" style="left:190px;top:195px;width:30px">2.00</div>
<div class="t cell" style="left:229px;top:195px;width:30px">2.00</div>
<div class="t cell" style="left:268px;top:195px;width:30px">2.00</div>
<div class="t cell" style="left:307px;top:195px;width:30px">2.00</div>
<div class="t cell" style="left:346px;top:195px;width:30px">2.00</div>
<div class="t cell" style="left:388px;top:195px;width:30px">2.00</div>
<div class="t cell" style="left:427px;top:195px;width:30px">2.00</div>
<div class="t cell" style="left:466px;top:195px;width:30px">2.00</div>
<div class="t cell" style="left:505px;top:195px;width:30px">2.00</div>
<div class="t cell" style="left:544px;top:195px;width:30px">2.00</div>
<div class="t cell" style="left:587px;top:195px;width:30px">2.00</div>
<div class="t cell" style="left:76px;top:214px;width:30px">2.00</div>
<div class="t cell" style="left:112px;top:214px;width:30px">2.00</div>
<div class="t cell" style="left:151px;top:214px;width:30px">2.00</div>
<div class="t cell" style="left:190px;top:214px;width:30px">2.00</div>
<div class="t cell" style="left:229px;top:214px;width:30px">2.00</div>
<div class="t cell" style="left:268px;top:214px;width:30px">2.00</div>
<div class="t cell" style="left:307px;top:214px;width:30px">2.00</div>
<div class="t cell" style="left:346px;top:214px;width:30px">2.00</div>
<div class="t cell" style="left:388px;top:214px;width:30px">2.00</div>
<div class="t cell" style="left:427px;top:214px;width:30px">2.00</div>
<div class="t cell" style="left:466px;top:214px;width:30px">2.00</div>
<div class="t cell" style="left:505px;top:214px;width:30px">2.00</div>
<div class="t cell" style="left:544px;top:214px;width:30px">2.00</div>
<div class="t cell" style="left:587px;top:214px;width:30px">2.00</div>
<div class="t cell" style="left:76px;top:233px;width:30px">2.00</div>
<div class="t cell" style="left:112px;top:233px;width:30px">2.00</div>
<div class="t cell" style="left:151px;top:233px;width:30px">2.00</div>
<div class="t cell" style="left:190px;top:233px;width:30px">2.00</div>
<div class="t cell" style="left:229px;top:233px;width:30px">2.00</div>
<div class="t cell" style="left:268px;top:233px;width:30px">2.00</div>
<div class="t cell" style="left:307px;top:233px;width:30px">2.00</div>
<div class="t cell" style="left:346px;top:233px;width:30px">2.00</div>
<div class="t cell" style="left:388px;top:233px;width:30px">2.00</div>
<div class="t cell" style="left:427px;top:233px;width:30px">2.00</div>
<div class="t cell" style="left:466px;top:233px;width:30px">2.00</div>
<div class="t cell" style="left:505px;top:233px;width:30px">2.00</div>
<div class="t cell" style="left:544px;top:233px;width:30px">2.00</div>
<div class="t cell" style="left:587px;top:233px;width:30px">2.00</div>
<div class="t cell" style="left:76px;top:252px;width:30px">2.00</div>
<div class="t cell" style="left:112px;top:252px;width:30px">2.00</div>
<div class="t cell" style="left:151px;top:252px;width:30px">2.00</div>
<div class="t cell" style="left:190px;top:252px;width:30px">2.00</div>
<div class="t cell" style="left:229px;top:252px;width:30px">2.00</div>
<div class="t cell" style="left:268px;top:252px;width:30px">2.00</div>
<div class="t cell" style="left:307px;top:252px;width:30px">2.00</div>
<div class="t cell" style="left:346px;top:252px;width:30px">2.00</div>
<div class="t cell" style="left:388px;top:252px;width:30px">2.00</div>
<div class="t cell" style="left:427px;top:252px;width:30px">2.00</div>
<div class="t cell" style="left:466px;top:252px;width:30px">2.00</div>
<div class="t cell" style="left:505px;top:252px;width:30px">2.00</div>
<div class="t cell" style="left:544px;top:252px;width:30px">2.00</div>
<div class="t cell" style="left:587px;top:252px;width:30px">2.00</div>
<div class="t cell" style="left:76px;top:271px;width:30px">2.00</div>
<div class="t cell" style="left:112px;top:271px;width:30px">2.00</div>
<div class="t cell" style="left:151px;top:271px;width:30px">2.00</div>
<div class="t cell" style="left:190px;top:271px;width:30px">2.00</div>
<div class="t cell" style="left:229px;top:271px;width:30px">2.00</div>
<div class="t cell" style="left:268px;top:271px;width:30px">2.00</div>
<div class="t cell" style="left:307px;top:271px;width:30px">2.00</div>
<div class="t cell" style="left:346px;top:271px;width:30px">2.00</div>
<div class="t cell" style="left:388px;top:271px;width:30px">2.00</div>
<div class="t cell" style="left:427px;top:271px;width:30px">2.00</div>
<div class="t cell" style="left:466px;top:271px;width:30px">2.00</div>
<div class="t cell" style="left:505px;top:271px;width:30px">2.00</div>
<div class="t cell" style="left:544px;top:271px;width:30px">2.00</div>
<div class="t cell" style="left:587px;top:271px;width:30px">2.00</div>
<div class="t cell" style="left:76px;top:290px;width:30px">2.00</div>
<div class="t cell" style="left:112px;top:290px;width:30px">2.00</div>
<div class="t cell" style="left:151px;top:290px;width:30px">2.00</div>
<div class="t cell" style="left:190px;top:290px;width:30px">2.00</div>
<div class="t cell" style="left:229px;top:290px;width:30px">2.00</div>
<div class="t cell" style="left:268px;top:290px;width:30px">2.00</div>
<div class="t cell" style="left:307px;top:290px;width:30px">2.00</div>
<div class="t cell" style="left:346px;top:290px;width:30px">2.00</div>
<div class="t cell" style="left:388px;top:290px;width:30px">2.00</div>
<div class="t cell" style="left:427px;top:290px;width:30px">2.00</div>
<div class="t cell" style="left:466px;top:290px;width:30px">2.00</div>
<div class="t cell" style="left:505px;top:290px;width:30px">2.00</div>
<div class="t cell" style="left:544px;top:290px;width:30px">2.00</div>
<div class="t cell" style="left:587px;top:290px;width:30px">2.00</div>
<div class="t cell" style="left:76px;top:309px;width:30px">2.00</div>
<div class="t cell" style="left:112px;top:309px;width:30px">2.00</div>
<div class="t cell" style="left:151px;top:309px;width:30px">2.00</div>
<div class="t cell" style="left:190px;top:309px;width:30px">2.00</div>
<div class="t cell" style="left:229px;top:309px;width:30px">2.00</div>
<div class="t cell" style="left:268px;top:309px;width:30px">2.00</div>
<div class="t cell" style="left:307px;top:309px;width:30px">2.00</div>
<div class="t cell" style="left:346px;top:309px;width:30px">2.00</div>
<div class="t cell" style="left:388px;top:309px;width:30px">2.00</div>
<div class="t cell" style="left:427px;top:309px;width:30px">2.00</div>
<div class="t cell" style="left:466px;top:309px;width:30px">2.00</div>
<div class="t cell" style="left:505px;top:309px;width:30px">2.00</div>
<div class="t cell" style="left:544px;top:309px;width:30px">2.00</div>
<div class="t cell" style="left:587px;top:309px;width:30px">2.00</div>
<div class="t cell" style="left:76px;top:328px;width:30px">2.00</div>
<div class="t cell" style="left:112px;top:328px;width:30px">2.00</div>
<div class="t cell" style="left:151px;top:328px;width:30px">2.00</div>
<div class="t cell" style="left:190px;top:328px;width:30px">2.00</div>
<div class="t cell" style="left:229px;top:328px;width:30px">2.00</div>
<div class="t cell" style="left:268px;top:328px;width:30px">2.00</div>
<div class="t cell" style="left:307px;top:328px;width:30px">2.00</div>
<div class="t cell" style="left:346px;top:328px;width:30px">2.00</div>
<div class="t cell" style="left:388px;top:328px;width:30px">2.00</div>
<div class="t cell" style="left:427px;top:328px;width:30px">2.00</div>
<div class="t cell" style="left:466px;top:328px;width:30px">2.00</div>
<div class="t cell" style="left:505px;top:328px;width:30px">2.00</div>
<div class="t cell" style="left:544px;top:328px;width:30px">2.00</div>
<div class="t cell" style="left:587px;top:328px;width:30px">2.00</div>
<div class="t cell" style="left:76px;top:347px;width:30px">2.00</div>
<div class="t cell" style="left:112px;top:347px;width:30px">2.00</div>
<div class="t cell" style="left:151px;top:347px;width:30px">2.00</div>
<div class="t cell" style="left:190px;top:347px;width:30px">2.00</div>
<div class="t cell" style="left:229px;top:347px;width:30px">2.00</div>
<div class="t cell" style="left:268px;top:347px;width:30px">2.00</div>
<div class="t cell" style="left:307px;top:347px;width:30px">2.00</div>
<div class="t cell" style="left:346px;top:347px;width:30px">2.00</div>
<div class="t cell" style="left:388px;top:347px;width:30px">2.00</div>
<div class="t cell" style="left:427px;top:347px;width:30px">2.00</div>
<div class="t cell" style="left:466px;top:347px;width:30px">2.00</div>
<div class="t cell" style="left:505px;top:347px;width:30px">2.00</div>
<div class="t cell" style="left:544px;top:347px;width:30px">2.00</div>
<div class="t cell" style="left:587px;top:347px;width:30px">2.00</div>
<div class="t cell" style="left:76px;top:366px;width:30px">2.00</div>
<div class="t cell" style="left:112px;top:366px;width:30px">2.00</div>
<div class="t cell" style="left:151px;top:366px;width:30px">2.00</div>
<div class="t cell" style="left:190px;top:366px;width:30px">2.00</div>
<div class="t cell" style="left:229px;top:366px;width:30px">2.00</div>
<div class="t cell" style="left:268px;top:366px;width:30px">2.00</div>
<div class="t cell" style="left:307px;top:366px;width:30px">2.00</div>
<div class="t cell" style="left:346px;top:366px;width:30px">2.00</div>
<div class="t cell" style="left:388px;top:366px;width:30px">2.00</div>
<div class="t cell" style="left:427px;top:366px;width:30px">2.00</div>
<div class="t cell" style="left:466px;top:366px;width:30px">2.00</div>
<div class="t cell" style="left:505px;top:366px;width:30px">2.00</div>
<div class="t cell" style="left:544px;top:366px;width:30px">2.00</div>
<div class="t cell" style="left:587px;top:366px;width:30px">2.00</div>
<div class="t cell" style="left:76px;top:385px;width:30px">2.00</div>
<div class="t cell" style="left:112px;top:385px;width:30px">2.00</div>
<div class="t cell" style="left:151px;top:385px;width:30px">2.00</div>
<div class="t cell" style="left:190px;top:385px;width:30px">2.00</div>
<div class="t cell" style="left:229px;top:385px;width:30px">2.00</div>
<div class="t cell" style="left:268px;top:385px;width:30px">2.00</div>
<div class="t cell" style="left:307px;top:385px;width:30px">2.00</div>
<div class="t cell" style="left:346px;top:385px;width:30px">2.00</div>
<div class="t cell" style="left:388px;top:385px;width:30px">2.00</div>
<div class="t cell" style="left:427px;top:385px;width:30px">2.00</div>
<div class="t cell" style="left:466px;top:385px;width:30px">2.00</div>
<div class="t cell" style="left:505px;top:385px;width:30px">2.00</div>
<div class="t cell" style="left:544px;top:385px;width:30px">2.00</div>
<div class="t cell" style="left:587px;top:385px;width:30px">2.00</div>
<div class="t cell" style="left:76px;top:404px;width:30px">2.00</div>
<div class="t cell" style="left:112px;top:404px;width:30px">2.00</div>
<div class="t cell" style="left:151px;top:404px;width:30px">2.00</div>
<div class="t cell" style="left:190px;top:404px;width:30px">2.00</div>
<div class="t cell" style="left:229px;top:404px;width:30px">2.00</div>
<div class="t cell" style="left:268px;top:404px;width:30px">2.00</div>
<div class="t cell" style="left:307px;top:404px;width:30px">2.00</div>
<div class="t cell" style="left:346px;top:404px;width:30px">2.00</div>
<div class="t cell" style="left:388px;top:404px;width:30px">2.00</div>
<div class="t cell" style="left:427px;top:404px;width:30px">2.00</div>
<div class="t cell" style="left:466px;top:404px;width:30px">2.00</div>
<div class="t cell" style="left:505px;top:404px;width:30px">2.00</div>
<div class="t cell" style="left:544px;top:404px;width:30px">2.00</div>
<div class="t cell" style="left:587px;top:404px;width:30px">2.00</div>
<div class="t cell" style="left:76px;top:423px;width:30px">2.00</div>
<div class="t cell" style="left:112px;top:423px;width:30px">2.00</div>
<div class="t cell" style="left:151px;top:423px;width:30px">2.00</div>
<div class="t cell" style="left:190px;top:423px;width:30px">2.00</div>
<div class="t cell" style="left:229px;top:423px;width:30px">2.00</div>
<div class="t cell" style="left:268px;top:423px;width:30px">2.00</div>
<div class="t cell" style="left:307px;top:423px;width:30px">2.00</div>
<div class="t cell" style="left:346px;top:423px;width:30px">2.00</div>
<div class="t cell" style="left:388px;top:423px;width:30px">2.00</div>
<div class="t cell" style="left:427px;top:423px;width:30px">2.00</div>
<div class="t cell" style="left:466px;top:423px;width:30px">2.00</div>
<div class="t cell" style="left:505px;top:423px;width:30px">2.00</div>
<div class="t cell" style="left:544px;top:423px;width:30px">2.00</div>
<div class="t cell" style="left:587px;top:423px;width:30px">2.00</div>
<div class="t cell" style="left:76px;top:442px;width:30px">2.00</div>
<div class="t cell" style="left:112px;top:442px;width:30px">2.00</div>
<div class="t cell" style="left:151px;top:442px;width:30px">2.00</div>
<div class="t cell" style="left:190px;top:442px;width:30px">2.00</div>
<div class="t cell" style="left:229px;top:442px;width:30px">2.00</div>
<div class="t cell" style="left:268px;top:442px;width:30px">2.00</div>
<div class="t cell" style="left:307px;top:442px;width:30px">2.00</div>
<div class="t cell" style="left:346px;top:442px;width:30px">2.00</div>
<div class="t cell" style="left:388px;top:442px;width:30px">2.00</div>
<div class="t cell" style="left:427px;top:442px;width:30px">2.00</div>
<div class="t cell" style="left:466px;top:442px;width:30px">2.00</div>
<div class="t cell" style="left:505px;top:442px;width:30px">2.00</div>
<div class="t cell" style="left:544px;top:442px;width:30px">2.00</div>
<div class="t cell" style="left:587px;top:442px;width:30px">2.00</div>
<div class="t cell" style="left:76px;top:461px;width:30px">2.00</div>
<div class="t cell" style="left:112px;top:461px;width:30px">2.00</div>
<div class="t cell" style="left:151px;top:461px;width:30px">2.00</div>
<div class="t cell" style="left:190px;top:461px;width:30px">2.00</div>
<div class="t cell" style="left:229px;top:461px;width:30px">2.00</div>
<div class="t cell" style="left:268px;top:461px;width:30px">2.00</div>
<div class="t cell" style="left:307px;top:461px;width:30px">2.00</div>
<div class="t cell" style="left:346px;top:461px;width:30px">2.00</div>
<div class="t cell" style="left:388px;top:461px;width:30px">2.00</div>
<div class="t cell" style="left:427px;top:461px;width:30px">2.00</div>
<div class="t cell" style="left:466px;top:461px;width:30px">2.00</div>
<div class="t cell" style="left:505px;top:461px;width:30px">2.00</div>
<div class="t cell" style="left:544px;top:461px;width:30px">2.00</div>
<div class="t cell" style="left:587px;top:461px;width:30px">2.00</div>
<div class="t cell" style="left:76px;top:480px;width:30px">2.00</div>
<div class="t cell" style="left:112px;top:480px;width:30px">2.00</div>
<div class="t cell" style="left:151px;top:480px;width:30px">2.00</div>
<div class="t cell" style="left:190px;top:480px;width:30px">2.00</div>
<div class="t cell" style="left:229px;top:480px;width:30px">2.00</div>
<div class="t cell" style="left:268px;top:480px;width:30px">2.00</div>
<div class="t cell" style="left:307px;top:480px;width:30px">2.00</div>
<div class="t cell" style="left:346px;top:480px;width:30px">2.00</div>
<div class="t cell" style="left:388px;top:480px;width:30px">2.00</div>
<div class="t cell" style="left:427px;top:480px;width:30px">2.00</div>
<div class="t cell" style="left:466px;top:480px;width:30px">2.00</div>
<div class="t cell" style="left:505px;top:480px;width:30px">2.00</div>
<div class="t cell" style="left:544px;top:480px;width:30px">2.00</div>
<div class="t cell" style="left:587px;top:480px;width:30px">2.00</div>
<div class="t cell" style="left:76px;top:499px;width:30px">2.00</div>
<div class="t cell" style="left:112px;top:499px;width:30px">2.00</div>
<div class="t cell" style="left:151px;top:499px;width:30px">2.00</div>
<div class="t cell" style="left:190px;top:499px;width:30px">2.00</div>
<div class="t cell" style="left:229px;top:499px;width:30px">2.00</div>
<div class="t cell" style="left:268px;top:499px;width:30px">2.00</div>
<div class="t cell" style="left:307px;top:499px;width:30px">2.00</div>
<div class="t cell" style="left:346px;top:499px;width:30px">2.00</div>
<div class="t cell" style="left:388px;top:499px;width:30px">2.00</div>
<div class="t cell" style="left:427px;top:499px;width:30px">2.00</div>
<div class="t cell" style="left:466px;top:499px;width:30px">2.00</div>
<div class="t cell" style="left:505px;top:499px;width:30px">2.00</div>
<div class="t cell" style="left:544px;top:499px;width:30px">2.00</div>
<div class="t cell" style="left:587px;top:499px;width:30px">2.00</div>
<div class="t cell" style="left:76px;top:518px;width:30px">2.00</div>
<div class="t cell" style="left:112px;top:518px;width:30px">2.00</div>
<div class="t cell" style="left:151px;top:518px;width:30px">2.00</div>
<div class="t cell" style="left:190px;top:518px;width:30px">2.00</div>
<div class="t cell" style="left:229px;top:518px;width:30px">2.00</div>
<div class="t cell" style="left:268px;top:518px;width:30px">2.00</div>
<div class="t cell" style="left:307px;top:518px;width:30px">2.00</div>
<div class="t cell" style="left:346px;top:518px;width:30px">2.00</div>
<div class="t cell" style="left:388px;top:518px;width:30px">2.00</div>
<div class="t cell" style="left:427px;top:518px;width:30px">2.00</div>
<div class="t cell" style="left:466px;top:518px;width:30px">2.00</div>
<div class="t cell" style="left:505px;top:518px;width:30px">2.00</div>
<div class="t cell" style="left:544px;top:518px;width:30px">2.00</div>
<div class="t cell" style="left:587px;top:518px;width:30px">2.00</div>
<div class="t cell" style="left:76px;top:537px;width:30px">2.00</div>
<div class="t cell" style="left:112px;top:537px;width:30px">2.00</div>
<div class="t cell" style="left:151px;top:537px;width:30px">2.00</div>
<div class="t cell" style="left:190px;top:537px;width:30px">2.00</div>
<div class="t cell" style="left:229px;top:537px;width:30px">2.00</div>
<div class="t cell" style="left:268px;top:537px;width:30px">2.00</div>
<div class="t cell" style="left:307px;top:537px;width:30px">2.00</div>
<div class="t cell" style="left:346px;top:537px;width:30px">2.00</div>
<div class="t cell" style="left:388px;top:537px;width:30px">2.00</div>
<div class="t cell" style="left:427px;top:537px;width:30px">2.00</div>
<div class="t cell" style="left:466px;top:537px;width:30px">2.00</div>
<div class="t cell" style="left:505px;top:537px;width:30px">2.00</div>
<div class="t cell" style="left:544px;top:537px;width:30px">2.00</div>
<div class="t cell" style="left:587px;top:537px;width:30px">2.00</div>
<div class="ab" style="left:0;top:738px;width:1024px;height:30px;background:linear-gradient(to bottom,#3168D5 0px,#4993E6 1px,#2A72E0 3px,#245EDB 6px,#245EDB 25px,#1941A5 30px)"></div>
<div class="ab" style="left:0;top:738px;width:96px;height:30px;border-radius:0 9px 9px 0/0 15px 15px 0;background:linear-gradient(to bottom,#2E7A2E 0px,#6ABF6A 1px,#58B058 4px,#3DA63D 8px,#3AA43A 20px,#329632 26px,#2A802A 30px);box-shadow:inset -6px 0 6px -3px #2A702A"></div>
<svg class="ab" style="left:0;top:738px" width="40" height="30" viewBox="0 738 40 30"><g fill="#1E5A1E" opacity="0.45" transform="translate(0.8,0.8)"><path d="M12.5 744L21 744.5 20 751 12 750.5z M22 747.5L29 747 28 753.5 21.5 754z M11.5 751.5L19.5 752 18.5 759 11 758.5z M20 754.5L27.5 754 26.5 760.5 19 761z"/></g>
<path d="M12.5 744C15 743 18 743.5 21 744.5L20 751C17 750 14.5 750 12 750.5z" fill="#F07830"/>
<path d="M22 747.5C24.5 748 26.5 747.5 29 747L28 753.5C25.5 754 23.5 754.5 21.5 754z" fill="#8ED43A"/>
<path d="M11.5 751.5C14 751 16.5 751 19.5 752L18.5 759C16 758 13.5 758 11 758.5z" fill="#6A92E8"/>
<path d="M20 754.5C22.5 755 25 754.5 27.5 754L26.5 760.5C24 761 21.5 761.5 19 761z" fill="#F2CC28"/>
</svg>
<div class="t" style="left:35px;top:745px;font-size:17px;font-weight:bold;font-style:italic;color:#fff;text-shadow:1px 1px 1px #1A4A1A">start</div>
<svg class="ab" style="left:108px;top:744px" width="110" height="18" viewBox="108 744 110 18">
<g transform="translate(0,-2)"><path d="M111.5 755.5h9c0.3-3-1.5-5.5-4.5-5.5s-5 2.5-5 5.5 2 5 5 5c2 0 3.5-1 4.2-2.5" fill="none" stroke="#5AB4F4" stroke-width="2.2"/>
<path d="M112 754.5h8" stroke="#5AB4F4" stroke-width="1.3"/></g>
<path d="M110.5 759c-2 2.5 1 3 5 1s7-6 8-10c0.5-2.5-1.5-3-4-2" fill="none" stroke="#78C8F8" stroke-width="1.1"/>
<rect x="132.5" y="745" width="14.5" height="15" fill="#7E7E10"/>
<path d="M133.5 749v-3h3M146 749v-3h-3M133.5 756v3h3M146 756v3h-3" fill="none" stroke="#F4F4B0" stroke-width="1.2"/>
<circle cx="139.8" cy="752.5" r="4.6" fill="#F8F8C0"/><path d="M139.5 749.5v3.3h2.6" fill="none" stroke="#7E7E10" stroke-width="1.3"/>
<rect x="155.5" y="744.5" width="14.5" height="15.5" fill="#E4E4F2" stroke="#5A6090" stroke-width="0.8"/>
<rect x="155.5" y="758.5" width="14.5" height="1.5" fill="#3A4070"/>
<circle cx="162.5" cy="751.5" r="3.8" fill="none" stroke="#3E6AB0" stroke-width="1.8"/><path d="M164.5 754l2 2" stroke="#3E6AB0" stroke-width="1.6"/>
<path d="M178.5 748c0-2 1-3 3-3h7c2 0 3 1 3 3v9c0 2-1 3-3 3h-7c-2 0-3-1-3-3z" fill="#E8F6FF" stroke="#2A70C8" stroke-width="1"/>
<path d="M181 751h5M181 754h4" stroke="#4A88D0" stroke-width="1"/><path d="M183 758l7-8 1.5 1.5-7 8z" fill="#1A1A40"/><path d="M188 745l3-1" stroke="#fff" stroke-width="1"/>
<circle cx="208" cy="752.5" r="7" fill="#E8E090"/>
<path d="M208 745.5A7 7 0 0 0 201 752.5h3A4 4 0 0 1 208 748.5z" fill="#E84838"/>
<path d="M208 745.5A7 7 0 0 1 215 752.5h-3A4 4 0 0 0 208 748.5z" fill="#58B038"/>
<path d="M201 752.5A7 7 0 0 0 208 759.5v-3A4 4 0 0 1 204 752.5z" fill="#E8F0F8"/>
<circle cx="208" cy="752.5" r="4" fill="#F4F4F4"/><path d="M206.5 750v5.5l4.2-2.75z" fill="#111"/>
</svg>
<div class="ab" style="left:240px;top:741px;width:145px;height:24px;border-radius:3px;background:linear-gradient(to bottom,#5AA0F8 0,#3C81F3 2px,#3C81F3 22px,#2E6AE0 25px);border:1px solid #2256D0;"></div><svg class="ab" style="left:248px;top:745px" width="18" height="17" viewBox="0 0 18 17"><path d="M4.5 1h10l1.5 1.5V15H4.5z" fill="#F4F6FC" stroke="#2A3A70" stroke-width="0.8"/><path d="M15 1.2l1 -0.8" stroke="#fff" stroke-width="1"/><path d="M3 8.5h7.5c0-2-1.5-3.5-3.5-3.5S3.2 6.5 3.2 8.5s1.5 3.8 3.8 3.8c1.5 0 2.6-0.7 3.2-1.7" fill="none" stroke="#1A3A90" stroke-width="1.8"/><path d="M1.5 12c-1 2 1 2 4 0.5M10 4.5c1.5-1 2.5-0.5 1.5 1.2" fill="none" stroke="#6AB0E8" stroke-width="1"/></svg><div class="t" style="left:269px;top:748px;font-size:11px;color:#fff">Mazda Forums - po...</div>
<div class="ab" style="left:386px;top:741px;width:146px;height:24px;border-radius:3px;background:linear-gradient(to bottom,#5AA0F8 0,#3C81F3 2px,#3C81F3 22px,#2E6AE0 25px);border:1px solid #2256D0;"></div><svg class="ab" style="left:395px;top:745px" width="17" height="15" viewBox="0 0 17 15"><path d="M1.5 3.5c0-1.5 1-2.5 2.5-2.5h3l1.5 1.5h5.5c1 0 1.5 0.5 1.5 1.5v8.5H1.5z" fill="#E8C860" stroke="#8A6A18" stroke-width="0.8"/><path d="M2.5 13.5l1.5-7.5h12.5l-1.8 7.5z" fill="#F8E088" stroke="#6A5010" stroke-width="0.8"/><path d="M3 14.2h12.5" stroke="#102050" stroke-width="1.2"/></svg><div class="t" style="left:415px;top:748px;font-size:11px;color:#fff">DTA</div>
<div class="ab" style="left:533px;top:741px;width:145px;height:24px;border-radius:3px;background:linear-gradient(to bottom,#5AA0F8 0,#3C81F3 2px,#3C81F3 22px,#2E6AE0 25px);border:1px solid #2256D0;"></div><div class="ab" style="left:543px;top:745px;width:16px;height:16px;background:#fff;border:1px solid #203070"><div class="ab" style="left:0;top:2px;width:9px;height:9px;background:#1A2A80;color:#fff;font-size:8px;font-weight:bold;line-height:9px;text-align:center">W</div></div><div class="t" style="left:562px;top:748px;font-size:11px;color:#fff">manual - Microsoft ...</div>
<div class="ab" style="left:680px;top:741px;width:148px;height:24px;border-radius:3px;background:linear-gradient(to bottom,#1E4FC4 0,#1A48BB 100%);border:1px solid #173CA0;"></div><svg class="ab" style="left:690px;top:745px" width="16" height="16" viewBox="0 0 16 16"><path d="M0 0H13V7H15V15H11V13H9V15H4V13H2V15H0z" fill="#14F0F4"/><path d="M2.5 4V11M2.5 4.5H4L5 6V9L4 10.5H2.5M5.5 4.5H9M7.2 4.5V11.5M9.5 11L11 5L12.5 11M10 9H12" fill="none" stroke="#0A6E98" stroke-width="1.5"/></svg><div class="t" style="left:709px;top:748px;font-size:11px;color:#fff">DTAwin Ver&nbsp; 35. 1&nbsp; ...</div>
<div class="ab" style="left:841px;top:738px;width:183px;height:30px;background:linear-gradient(to bottom,#1290E8 0,#18A0F0 2px,#0F94EC 8px,#0E8AE4 25px,#0C6FC8 30px);border-left:1px solid #0A5BC0"></div>
<div class="ab" style="left:833px;top:745px;width:17px;height:17px;border-radius:50%;background:radial-gradient(circle at 40% 35%,#A8D8FF,#3A8CE8 70%);border:1px solid #E0F0FF"><svg class="ab" style="left:3px;top:3px" width="9" height="9" viewBox="0 0 9 9"><path d="M6 1L2.5 4.5 6 8" fill="none" stroke="#fff" stroke-width="2"/></svg></div>
<svg class="ab" style="left:848px;top:742px" width="114" height="22" viewBox="848 742 114 22">
<rect x="852.5" y="748.5" width="9" height="7" fill="#2A2A50" stroke="#E8ECF4" stroke-width="1"/><rect x="851" y="756" width="10" height="2.5" fill="#D8DCE8"/>
<path d="M863 749c1 1.5 1 3.5 0 5M865 747.5c1.6 2.3 1.6 5.7 0 8M867 746c2 3 2 8 0 11" fill="none" stroke="#F0F4FF" stroke-width="1"/>
<rect x="870" y="745" width="16" height="16" fill="#0C1838"/><rect x="871" y="746" width="2" height="2" fill="#60D8E8"/>
<path d="M872.5 759c1-6 5-11 11-11.5M874.5 759.5c1-4.5 4-8 8.5-8.5" fill="none" stroke="#A8B0C0" stroke-width="1.2"/>
<rect x="880.5" y="754.5" width="5" height="5" fill="#F0F070" stroke="#202020" stroke-width="0.6"/>
<rect x="894" y="746" width="8" height="7" fill="#3A3A78" stroke="#C8C8D8" stroke-width="0.8"/><rect x="889" y="750" width="8" height="7" fill="#5A4A88" stroke="#D8D8E8" stroke-width="0.8"/><rect x="889" y="757" width="8" height="2" fill="#E0E0F0"/>
<path d="M896 754l7 7M903 754l-7 7" stroke="#E04A30" stroke-width="1.6"/>
<circle cx="913" cy="748.5" r="3" fill="#68B8E8"/><path d="M906.5 761c1-5 3.5-8 6.5-8s5.5 3 6.5 8z" fill="#A8D8E0"/><path d="M916 761c1-3 2.5-5 5-5.5v5.5z" fill="#E09840"/>
<rect x="928" y="745.5" width="8" height="6" fill="#C8B8A8" stroke="#F4F4F4" stroke-width="0.8"/><rect x="925" y="749" width="8" height="6" fill="#B0A090" stroke="#F4F4F4" stroke-width="0.8"/><rect x="925" y="755.5" width="8" height="2" fill="#E8E8E8"/>
<circle cx="935" cy="756" r="4.5" fill="#fff" stroke="#202020" stroke-width="0.8"/><path d="M932.5 755.8l1.8 2 3.5-3.8" fill="none" stroke="#2A9A2A" stroke-width="1.5"/>
<rect x="942.5" y="745.5" width="16" height="16" fill="#B81038" stroke="#2A0818" stroke-width="1"/>
<path d="M945 759.5h2.5M954 759.5h2.5M946 759V748l4.7 9 4.7-9v11" fill="none" stroke="#FFF0F4" stroke-width="1.5"/>
</svg>
<div class="t" style="left:965px;top:748px;font-size:11px;color:#fff">11:16 AM</div>
</body></html>
